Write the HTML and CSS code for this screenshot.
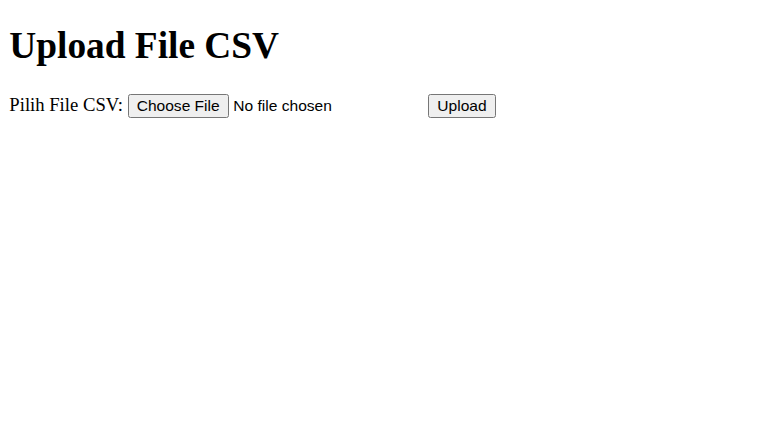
FILE: index.html
```html
<!DOCTYPE html>
<html>
<head>
<meta charset="utf-8">
<title>Upload File CSV</title>
<link rel="stylesheet" href="styles.css">
</head>
<body class="page">
<h1 class="title">Upload File CSV</h1>
<form class="upload-form" onsubmit="return false">
<label class="label" for="csv">Pilih File CSV:</label>
<input class="file-input" type="file" id="csv" name="csv" accept=".csv">
<button class="btn" type="submit">Upload</button>
</form>
</body>
</html>
```

FILE: styles.css
```css
html {
  zoom: 1.1667;
}
.page {
  margin: 8px;
  font-family: "Liberation Serif", "Times New Roman", serif;
  font-size: 16px;
  color: #000;
  background: #fff;
}
.title {
  font-size: 2em;
  font-weight: bold;
  margin: 12.6px 0 23px;
}
.upload-form {
  margin: 0;
}
.file-input,
.btn {
  font-family: "Liberation Sans", Arial, sans-serif;
  font-size: 13.333px;
}
.btn {
  margin-left: 1.7px;
}
```
